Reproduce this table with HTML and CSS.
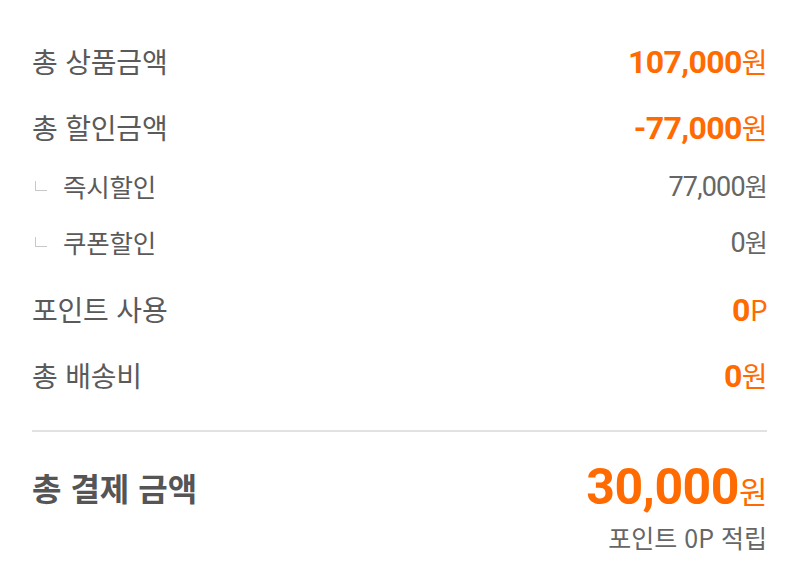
FILE: index.html
```html
<!DOCTYPE html>
<html lang="ko">
<head>
<meta charset="utf-8">
<link rel="stylesheet" href="styles.css">
</head>
<body>
<div class="summary">
  <div class="row main">
    <span class="label">총 상품금액</span>
    <span class="amount accent"><b>107,000</b><span class="unit">원</span></span>
  </div>
  <div class="row main">
    <span class="label">총 할인금액</span>
    <span class="amount accent"><b>-77,000</b><span class="unit">원</span></span>
  </div>
  <div class="row sub">
    <span class="label sublabel"><i class="branch"></i>즉시할인</span>
    <span class="amount plain">77,000<span class="unit">원</span></span>
  </div>
  <div class="row sub">
    <span class="label sublabel"><i class="branch"></i>쿠폰할인</span>
    <span class="amount plain">0<span class="unit">원</span></span>
  </div>
  <div class="row main after-sub">
    <span class="label">포인트 사용</span>
    <span class="amount accent"><b>0</b><span class="unit">P</span></span>
  </div>
  <div class="row main">
    <span class="label">총 배송비</span>
    <span class="amount accent"><b>0</b><span class="unit">원</span></span>
  </div>
  <hr class="divider">
  <div class="total">
    <span class="total-label">총 결제 금액</span>
    <div class="total-right">
      <span class="total-amount"><b>30,000</b><span class="unit">원</span></span>
      <span class="earn">포인트 0P 적립</span>
    </div>
  </div>
</div>
</body>
</html>
```

FILE: styles.css
```css
html, body {
  margin: 0;
  padding: 0;
  background: #fff;
}
body {
  font-family: Roboto, "Noto Sans CJK KR", sans-serif;
  color: #555;
}
.summary {
  padding: 41px 33px 0 32px;
  display: flex;
  flex-direction: column;
}
.row {
  display: flex;
  justify-content: space-between;
  align-items: center;
}
.row.main {
  height: 40px;
  margin-top: 26px;
}
.row.main:first-child {
  margin-top: 0;
}
.row.sub {
  height: 36px;
  margin-top: 20px;
}
.row.after-sub {
  margin-top: 30px;
}
.label {
  font-family: "Noto Sans CJK KR", sans-serif;
  font-size: 28px;
  color: #5a5a5a;
  letter-spacing: -0.2px;
}
.sublabel {
  display: flex;
  align-items: center;
  font-size: 25.5px;
}
.branch {
  display: inline-block;
  width: 11px;
  height: 9px;
  border-left: 1.5px solid #c8c8c8;
  border-bottom: 1.5px solid #c8c8c8;
  margin: 2px 16px 0 3px;
}
.amount {
  font-family: Roboto, "Noto Sans CJK KR", sans-serif;
}
.amount b {
  font-weight: 700;
}
.accent {
  color: #ff6b00;
  font-size: 32px;
  letter-spacing: -0.6px;
}
.accent .unit {
  font-family: "Noto Sans CJK KR", sans-serif;
  font-size: 28px;
  font-weight: 400;
}
.plain {
  color: #666;
  font-size: 27px;
  letter-spacing: -0.8px;
}
.plain .unit {
  font-family: "Noto Sans CJK KR", sans-serif;
  font-size: 25px;
}
.divider {
  border: 0;
  height: 2px;
  background: #e2e2e2;
  margin: 35px 0 0 0;
}
.total {
  display: flex;
  justify-content: space-between;
  align-items: flex-start;
  margin-top: 27px;
}
.total-label {
  font-family: "Noto Sans CJK KR", sans-serif;
  font-weight: 700;
  font-size: 32px;
  color: #555;
  margin-top: 5px;
}
.total-right {
  display: flex;
  flex-direction: column;
  align-items: flex-end;
}
.total-amount {
  color: #ff6b00;
  font-size: 50px;
  line-height: 56px;
  letter-spacing: -0.5px;
}
.total-amount b {
  font-weight: 700;
}
.total-amount .unit {
  font-family: "Noto Sans CJK KR", sans-serif;
  font-size: 31px;
  font-weight: 400;
}
.earn {
  font-family: "Noto Sans CJK KR", Roboto, sans-serif;
  font-size: 25px;
  color: #666;
  margin-top: 0;
}
```
